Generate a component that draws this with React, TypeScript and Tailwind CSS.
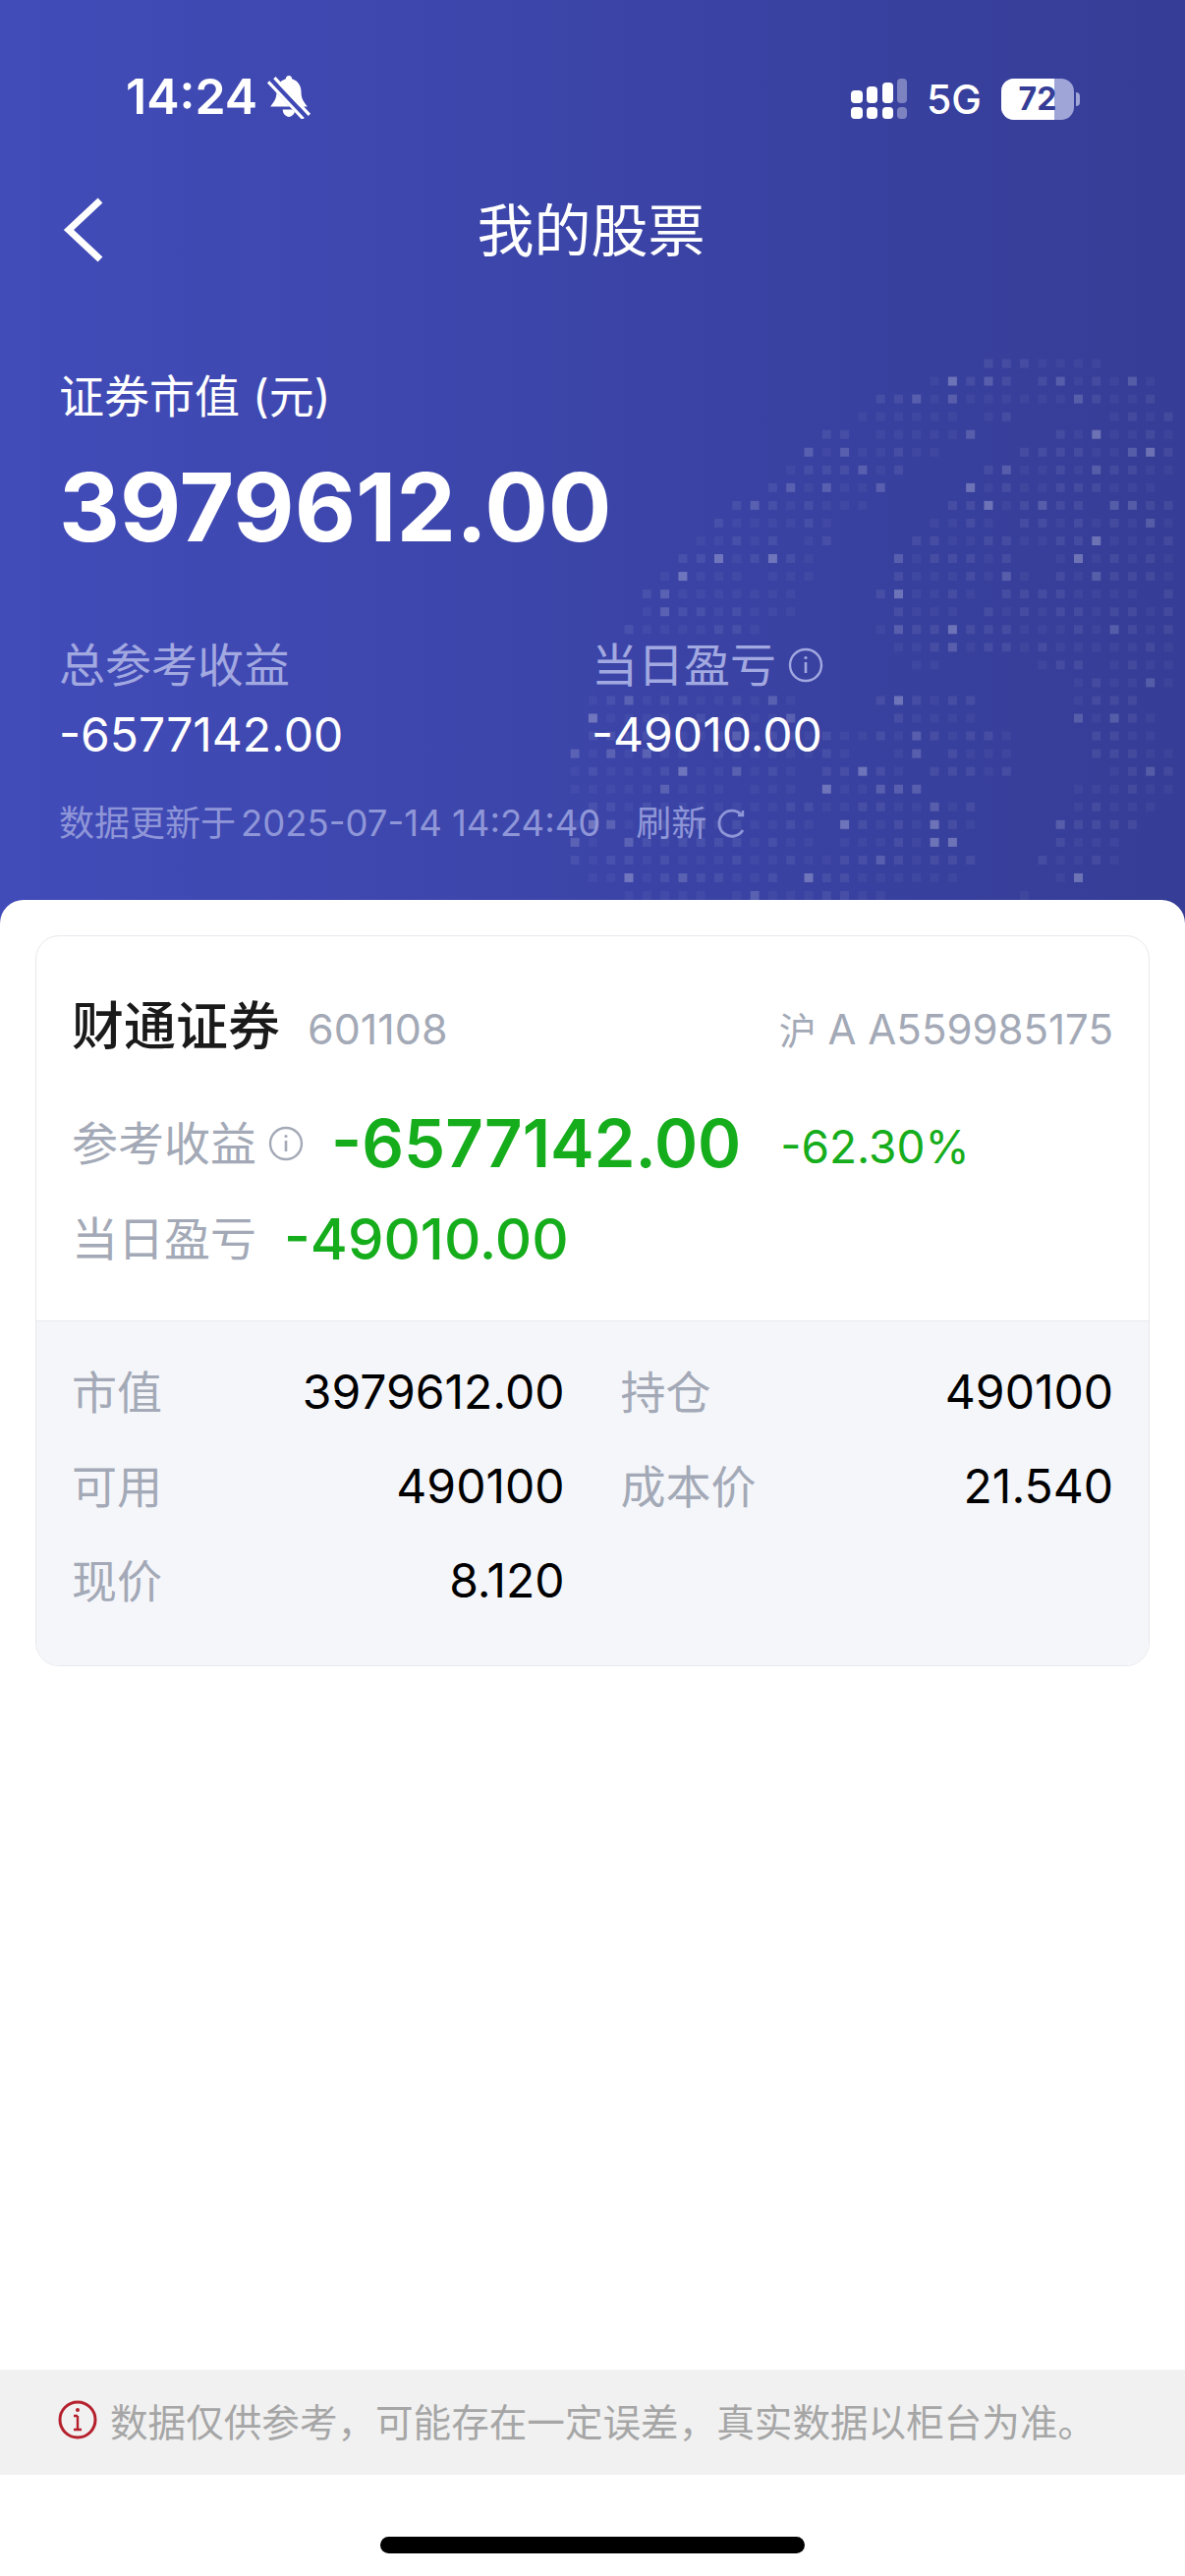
import React from "react";

const FONT = "font-['Inter','Noto_Sans_CJK_SC',sans-serif]";

const ROWS: [number, number][][] = [
  [[1070, 1430]],
  [[935, 1520]],
  [[805, 1568]],
  [[760, 1170], [1370, 1568]],
  [[670, 1040], [1245, 1568]],
  [[630, 950], [1150, 1568]],
  [[590, 900], [1070, 1568]],
  [[500, 820], [1020, 1568]],
  [[450, 780], [980, 1568]],
  [[410, 690], [935, 1568]],
  [[365, 690], [890, 1568]],
  [[320, 650], [850, 1568]],
  [[275, 650], [850, 1568]],
  [[230, 600], [800, 1568]],
  [[230, 600], [800, 1568]],
  [[190, 555], [800, 1568]],
  [[850, 1568]],
  [[890, 1000], [1200, 1568]],
  [[1290, 1568]],
  [[100, 600], [800, 1040], [1290, 1450]],
  [[100, 600], [850, 1080], [1290, 1500]],
  [[60, 1130], [1340, 1520]],
  [[60, 1130], [1330, 1530]],
  [[60, 1130], [1380, 1568]],
  [[60, 910], [1290, 1568]],
  [[60, 1080], [1290, 1500]],
  [[60, 1080], [1245, 1450]],
  [[60, 1040], [1245, 1430]],
  [[60, 1040], [1200, 1400]],
  [[100, 1000], [1245, 1340]],
  [[190, 820], [1110, 1200]],
];

function Dots() {
  const rects: React.ReactNode[] = [];
  ROWS.forEach((spans, r) => {
    spans.forEach(([a, b]) => {
      for (let c = Math.ceil((a - 195) / 44.4); 195 + c * 44.4 <= b; c++) {
        const n = Math.sin(c * 12.9898 + r * 78.233) * 43758.5453;
        const f = n - Math.floor(n);
        if (f < 0.06) continue;
        const o = f > 0.96 ? 0.27 : f > 0.86 ? 0.16 : f > 0.55 ? 0.07 : 0.04;
        const x = 640 + c * 18.3 - 4.5;
        const y = 370 + r * 18.05 - 4.5;
        rects.push(<rect key={`${r}-${c}`} x={x} y={y} width={9} height={9} fill="#fff" opacity={o} />);
      }
    });
  });
  return (
    <svg className="absolute inset-0 h-full w-full" viewBox="0 0 1206 940" aria-hidden>
      {rects}
    </svg>
  );
}

function Info({ cls }: { cls: string }) {
  return (
    <svg viewBox="0 0 36 36" className={cls} fill="none" stroke="currentColor" strokeWidth="2.4">
      <circle cx="18" cy="18" r="16" />
      <path d="M18 15v11" strokeWidth="2.6" />
      <circle cx="18" cy="10.500" r="1.6" fill="currentColor" stroke="none" />
    </svg>
  );
}

function Stat({ label, value }: { label: string; value: string }) {
  return (
    <div className="flex h-[96px] items-center justify-between">
      <span className="text-[46px] text-[#a3a9b6]">{label}</span>
      <span className="text-[48px] text-black">{value}</span>
    </div>
  );
}

export default function App() {
  return (
    <div className={`relative flex h-[2622px] w-[1206px] flex-col overflow-hidden bg-white ${FONT}`}>
      <header className="relative h-[940px] shrink-0 bg-gradient-to-r from-[#424cb9] to-[#353d96] text-white">
        <Dots />
        <div className="relative flex h-[196px] items-start justify-between pl-[128px] pr-[107px] pt-[68px]">
          <div className="flex items-center gap-[9px]">
            <span className="text-[50px] font-semibold leading-[60px]">14:24</span>
            <svg viewBox="0 0 44 44" className="h-[46px] w-[46px]" fill="#fff">
              <path d="M22 2c2 0 3 1.500 3 3 6 2 9 7 9 13 0 6 2 9 6 14H4c4-5 6-8 6-14 0-6 3-11 9-13 0-1.500 1-3 3-3z" />
              <path d="M16 35h12c0 4-3 7-6 7s-6-3-6-7z" />
              <path d="M3 6l36 38" stroke="#3f49b5" strokeWidth="7" />
              <path d="M8 4l34 36" stroke="#fff" strokeWidth="3" />
              <path d="M2 8l34 36" stroke="#fff" strokeWidth="3" />
            </svg>
          </div>
          <div className="flex items-center pt-[8px]">
            <svg viewBox="0 0 58 42" className="h-[42px] w-[60px]" fill="#fff">
              <rect x="0" y="12" width="12" height="13" rx="4" />
              <rect x="16" y="8" width="11" height="17" rx="4" />
              <rect x="32" y="4" width="11" height="21" rx="4" />
              <rect x="47" y="0" width="10" height="25" rx="4" opacity="0.35" />
              <rect x="0" y="29" width="12" height="12" rx="4" />
              <rect x="16" y="29" width="11" height="12" rx="4" />
              <rect x="32" y="29" width="11" height="12" rx="4" />
              <rect x="47" y="29" width="10" height="12" rx="4" opacity="0.35" />
            </svg>
            <span className="ml-[18px] text-[41px] font-medium leading-[50px]">5G</span>
            <div className="relative ml-[20px] flex h-[42px] w-[74px] items-center justify-center overflow-hidden rounded-[13px] bg-[#a0a5d8]">
              <div className="absolute inset-y-0 left-0 w-[54px] bg-white" />
              <span className="relative text-[32px] font-bold leading-none text-[#353d96]">72</span>
            </div>
            <div className="ml-[2px] h-[14px] w-[4px] rounded-r-full bg-[#a0a5d8]" />
          </div>
        </div>
        <div className="relative flex h-[80px] items-center justify-center pr-[3px]">
          <svg viewBox="0 0 44 66" className="absolute left-[64px] top-[5px] h-[66px] w-[44px]" fill="none" stroke="#fff" strokeWidth="7">
            <path d="M38 3 6 33l32 30" />
          </svg>
          <h1 className="-mt-[2px] text-[58px] font-normal leading-[80px]">我的股票</h1>
        </div>
        <div className="relative pl-[60px] pr-[62px] pt-[95px]">
          <p className="text-[46px] leading-[64px]">证券市值 (元)</p>
          <p className="mt-[31px] text-[96px] font-bold leading-[100px]">3979612.00</p>
          <div className="mt-[81px] flex">
            <div className="w-[542px]">
              <p className="text-[47px] leading-[60px] text-[#a2a8e0]">总参考收益</p>
              <p className="mt-[12px] text-[48px] leading-[58px]">-6577142.00</p>
            </div>
            <div>
              <div className="flex items-center gap-[12px] text-[#a2a8e0]">
                <span className="text-[47px] leading-[60px]">当日盈亏</span>
                <Info cls="h-[36px] w-[36px]" />
              </div>
              <p className="mt-[12px] text-[48px] leading-[58px]">-49010.00</p>
            </div>
          </div>
          <div className="mt-[36px] flex items-center text-[36px] leading-[50px] text-[#8f96d8]">
            <span>数据更新于</span>
            <span className="ml-[5px] text-[36.5px]">2025-07-14 14:24:40</span>
            <span className="ml-[36px]">刷新</span>
            <svg viewBox="0 0 32 32" className="ml-[10px] h-[32px] w-[32px]" fill="none" stroke="currentColor" strokeWidth="2.8">
              <path d="M26 8A13 13 0 1 0 27 23" />
              <path d="M22 8h5V3" strokeWidth="2.4" />
            </svg>
          </div>
        </div>
      </header>

      <main className="relative -mt-[24px] flex-1 rounded-t-[24px] bg-white px-[36px] pt-[36px]">
        <section className="overflow-hidden rounded-[24px] border border-[#e8e9ee]">
          <div className="h-[391px] pl-[36px] pr-[36px] pt-[61px]">
            <div className="flex h-[62px] items-center">
              <span className="text-[53px] font-medium leading-[62px] text-[#1a1a1a]">财通证券</span>
              <span className="ml-[28px] mt-[4px] text-[43px] text-[#a3a9b6]">601108</span>
              <span className="ml-auto mt-[4px] text-[42px] text-[#a3a9b6]">
                <span className="text-[38px]">沪</span> A A559985175
              </span>
            </div>
            <div className="mt-[48px] flex h-[80px] items-center">
              <span className="text-[47px] text-[#a3a9b6]">参考收益</span>
              <Info cls="ml-[12px] h-[36px] w-[36px] text-[#a3a9b6]" />
              <span className="ml-[28px] text-[67px] font-semibold leading-[80px] text-[#16ad1c]">-6577142.00</span>
              <span className="ml-[40px] mt-[6px] text-[46px] text-[#16ad1c]">-62.30%</span>
            </div>
            <div className="mt-[21px] flex h-[72px] items-center">
              <span className="text-[47px] text-[#a3a9b6]">当日盈亏</span>
              <span className="ml-[28px] text-[58px] font-medium leading-[72px] text-[#16ad1c]">-49010.00</span>
            </div>
          </div>
          <div className="grid h-[351px] grid-cols-2 content-start gap-x-[57px] border-t border-[#e8e9ee] bg-[#f5f6fa] px-[36px] pt-[24px]">
            <Stat label="市值" value="3979612.00" />
            <Stat label="持仓" value="490100" />
            <Stat label="可用" value="490100" />
            <Stat label="成本价" value="21.540" />
            <Stat label="现价" value="8.120" />
          </div>
        </section>
      </main>

      <footer className="shrink-0">
        <div className="flex h-[107px] items-center gap-[10px] bg-[#f1f1f1] pl-[59px]">
          <svg viewBox="0 0 40 44" className="-mt-[6px] h-[44px] w-[40px] text-[#b5202c]" fill="none" stroke="currentColor" strokeWidth="3">
            <circle cx="20" cy="22" r="18" />
            <path d="M20 18v14M16 18h4M16 32h8" strokeWidth="2.400" />
            <circle cx="20" cy="12" r="2" fill="currentColor" stroke="none" />
          </svg>
          <span className="ml-[3px] text-[38.6px] leading-[50px] text-[#a6a6a6]">数据仅供参考，可能存在一定误差，真实数据以柜台为准。</span>
        </div>
        <div className="flex h-[103px] justify-center pt-[63px]">
          <div className="h-[17px] w-[432px] rounded-full bg-black" />
        </div>
      </footer>
    </div>
  );
}
